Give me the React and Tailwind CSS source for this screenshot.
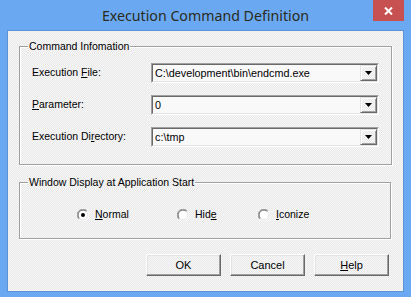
import React from 'react'

const ui = { fontFamily: '"Liberation Sans", Arial, sans-serif' }
const dither = 'bg-[#f0f0f0] bg-[repeating-conic-gradient(#f8f8f8_0%_25%,#e8e8e8_0%_50%)] bg-[length:2px_2px]'

function Arrow() {
  return (
    <svg width="7" height="4" viewBox="0 0 7 4">
      <path d="M0 0h7L3.5 4z" fill="#000" />
    </svg>
  )
}

function Combo({ value }) {
  return (
    <div className="flex h-[20px] w-[228px] border border-t-[#a0a0a0] border-l-[#a0a0a0] border-b-white border-r-white">
      <div className="flex flex-1 border border-t-[#696969] border-l-[#696969] border-b-[#e3e3e3] border-r-[#e3e3e3] bg-[#f9f9f9]">
        <div className="flex-1 pl-[2px] text-[10.8px] leading-[16px]">{value}</div>
        <div className={`flex w-[17px] items-center justify-center border border-t-[#e3e3e3] border-l-[#e3e3e3] border-b-[#696969] border-r-[#696969] shadow-[inset_1px_1px_0_#fff,inset_-1px_-1px_0_#a0a0a0] ${dither}`}>
          <Arrow />
        </div>
      </div>
    </div>
  )
}

function Radio({ checked }) {
  return (
    <svg width="12" height="12" viewBox="0 0 12 12">
      <circle cx="6" cy="6" r="5" fill="#fff" />
      <path d="M1.8 10.2A5.5 5.5 0 0 1 10.2 1.8" fill="none" stroke="#a0a0a0" />
      <path d="M2.5 9.5A4.5 4.5 0 0 1 9.5 2.5" fill="none" stroke="#696969" />
      <path d="M10.2 1.8A5.5 5.5 0 0 1 1.8 10.2" fill="none" stroke="#fff" />
      <path d="M9.5 2.5A4.5 4.5 0 0 1 2.5 9.5" fill="none" stroke="#e3e3e3" />
      {checked && <circle cx="6" cy="6" r="2" fill="#000" />}
    </svg>
  )
}

function Group({ title, className, children }) {
  return (
    <div className={`flex flex-col border border-[#a0a0a0] shadow-[1px_1px_0_#fff,inset_1px_1px_0_#fff] ${className}`}>
      <div className={`-mt-[7px] ml-[8px] self-start px-px leading-[13px] ${dither}`}>{title}</div>
      {children}
    </div>
  )
}

function Button({ children }) {
  return (
    <button className={`h-[22px] w-[75px] border border-t-white border-l-white border-b-[#696969] border-r-[#696969] text-[11px] shadow-[inset_-1px_-1px_0_#a0a0a0,inset_1px_1px_0_#e3e3e3] leading-[18px] ${dither}`}>
      {children}
    </button>
  )
}

const rows = [
  { label: <>Execution <u>F</u>ile:</>, value: 'C:\\development\\bin\\endcmd.exe' },
  { label: <><u>P</u>arameter:</>, value: '0' },
  { label: <>Execution Di<u>r</u>ectory:</>, value: 'c:\\tmp' },
]

const radios = [
  { label: <><u>N</u>ormal</>, checked: true, w: 'w-[100px]' },
  { label: <>Hid<u>e</u></>, checked: false, w: 'w-[81px]' },
  { label: <><u>I</u>conize</>, checked: false, w: 'w-[80px]' },
]

export default function App() {
  return (
    <div className="flex h-[297px] w-[411px] flex-col bg-[#6aa9f2]" style={ui}>
      <div className="relative flex h-[30px] items-center justify-center">
        <span className="pt-px text-[14.2px] text-[#2b2b20]" style={{ fontFamily: '"Noto Sans", sans-serif' }}>
          Execution Command Definition
        </span>
        <div className="absolute right-[7px] top-0 flex h-[21px] w-[31px] items-center justify-center bg-[#c75050]">
          <svg width="9" height="8" viewBox="0 0 9 8">
            <path d="M1 0.5l7 7M8 0.5l-7 7" stroke="#fff" strokeWidth="2" />
          </svg>
        </div>
      </div>
      <div className={`mx-[7px] flex h-[262px] flex-col border border-[#5b93d8] text-[10.5px] text-black ${dither}`}>
        <Group title="Command Infomation" className="ml-[11px] mt-[15px] h-[119px] w-[373px]">
          <div className="mt-[10px] flex flex-col gap-[12px]">
            {rows.map((r, i) => (
              <div key={i} className="flex h-[20px] items-center">
                <div className="w-[131px] pl-[12px]">{r.label}</div>
                <Combo value={r.value} />
              </div>
            ))}
          </div>
        </Group>
        <Group title="Window Display at Application Start" className="ml-[11px] mt-[17px] h-[57px] w-[372px]">
          <div className="mt-[19px] flex pl-[57px]">
            {radios.map((r, i) => (
              <div key={i} className={`flex items-center gap-[6px] ${r.w}`}>
                <Radio checked={r.checked} />
                <span className="leading-[13px]">{r.label}</span>
              </div>
            ))}
          </div>
        </Group>
        <div className="mr-[14px] mt-[15px] flex justify-end gap-[9px]">
          <Button>OK</Button>
          <Button>Cancel</Button>
          <Button><u>H</u>elp</Button>
        </div>
      </div>
    </div>
  )
}
